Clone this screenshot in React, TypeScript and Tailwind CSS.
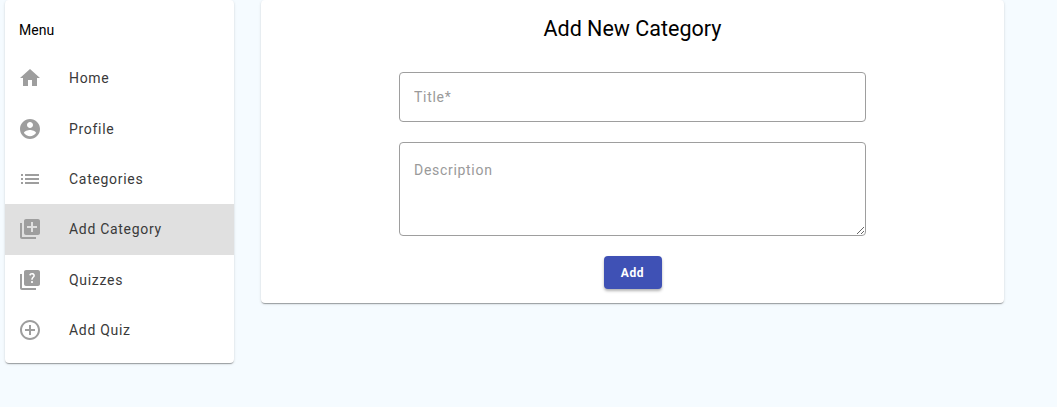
const cardShadow =
  "shadow-[0_2px_1px_-1px_rgba(0,0,0,0.2),0_1px_1px_0_rgba(0,0,0,0.14),0_1px_3px_0_rgba(0,0,0,0.12)]"

const Icon = ({ d }: { d: string }) => (
  <svg viewBox="0 0 24 24" className="w-6 h-6 fill-[#9e9e9e] shrink-0">
    <path d={d} />
  </svg>
)

const items = [
  { label: "Home", d: "M10 20v-6h4v6h5v-8h3L12 3 2 12h3v8z" },
  {
    label: "Profile",
    d: "M12 2C6.48 2 2 6.48 2 12s4.48 10 10 10 10-4.48 10-10S17.52 2 12 2zm0 3c1.66 0 3 1.34 3 3s-1.34 3-3 3-3-1.34-3-3 1.34-3 3-3zm0 14.2c-2.5 0-4.71-1.28-6-3.22.03-1.99 4-3.08 6-3.08 1.99 0 5.97 1.09 6 3.08-1.29 1.94-3.5 3.22-6 3.22z",
  },
  {
    label: "Categories",
    d: "M3 13h2v-2H3v2zm0 4h2v-2H3v2zm0-8h2V7H3v2zm4 4h14v-2H7v2zm0 4h14v-2H7v2zM7 7v2h14V7H7z",
  },
  {
    label: "Add Category",
    active: true,
    d: "M4 6H2v14c0 1.1.9 2 2 2h14v-2H4V6zm16-4H8c-1.1 0-2 .9-2 2v12c0 1.1.9 2 2 2h12c1.1 0 2-.9 2-2V4c0-1.1-.9-2-2-2zm-1 9h-4v4h-2v-4H9V9h4V5h2v4h4v2z",
  },
  {
    label: "Quizzes",
    d: "M4 6H2v14c0 1.1.9 2 2 2h14v-2H4V6zM20 2H8c-1.1 0-2 .9-2 2v12c0 1.1.9 2 2 2h12c1.1 0 2-.9 2-2V4c0-1.1-.9-2-2-2zm-5.99 13c-.59 0-1.05-.47-1.05-1.05 0-.59.47-1.04 1.05-1.04.59 0 1.04.45 1.04 1.04-.01.58-.45 1.05-1.04 1.05zm2.5-6.17c-.63.93-1.23 1.21-1.56 1.81-.13.24-.18.4-.18 1.18h-1.52c0-.41-.06-1.08.26-1.65.41-.73 1.18-1.16 1.63-1.8.48-.68.21-1.94-1.14-1.94-.88 0-1.32.67-1.5 1.23l-1.37-.57C11.51 5.96 12.52 5 13.99 5c1.23 0 2.08.56 2.51 1.26.37.61.58 1.73.01 2.57z",
  },
  {
    label: "Add Quiz",
    d: "M13 7h-2v4H7v2h4v4h2v-4h4v-2h-4V7zm-1-5C6.48 2 2 6.48 2 12s4.48 10 10 10 10-4.48 10-10S17.52 2 12 2zm0 18c-4.41 0-8-3.59-8-8s3.59-8 8-8 8 3.59 8 8-3.59 8-8 8z",
  },
]

export default function App() {
  return (
    <div className="min-h-[407px] bg-[#f5fbff] pl-[5px] font-['Roboto',sans-serif] flex items-start gap-x-[27px]">
      <aside className={`w-[229px] bg-white rounded pt-[6px] pb-2 overflow-hidden ${cardShadow}`}>
        <div className="h-[47px] flex items-center px-[14px] text-sm text-black">Menu</div>
        {items.map((item) => (
          <div
            key={item.label}
            className={`h-[50.4px] flex items-center px-[13px] ${item.active ? "bg-[#e0e0e0]" : ""}`}
          >
            <Icon d={item.d} />
            <span className="ml-[27px] text-sm tracking-[0.7px] text-[#3a3a3a]">{item.label}</span>
          </div>
        ))}
      </aside>
      <main className={`w-[743px] h-[303px] bg-white rounded flex flex-col items-center ${cardShadow}`}>
        <h1 className="mt-[14px] h-[29px] text-[21.5px] leading-[29px] text-black">Add New Category</h1>
        <input
          placeholder="Title*"
          className="mt-[29px] w-[467px] h-[50px] px-[14px] border border-[#9e9e9e] rounded text-sm tracking-[0.7px] outline-none placeholder:text-[#9a9a9a]"
        />
        <textarea
          placeholder="Description"
          className="block mt-5 w-[467px] h-[94px] px-[14px] py-[17px] border border-[#9e9e9e] rounded text-sm tracking-[0.7px] outline-none placeholder:text-[#9a9a9a]"
        />
        <button className="mt-5 w-[58px] h-[33px] rounded bg-[#3f51b5] text-white text-xs font-bold tracking-[0.6px] shadow-[0_2px_3px_rgba(0,0,0,0.3)]">
          Add
        </button>
      </main>
    </div>
  )
}
